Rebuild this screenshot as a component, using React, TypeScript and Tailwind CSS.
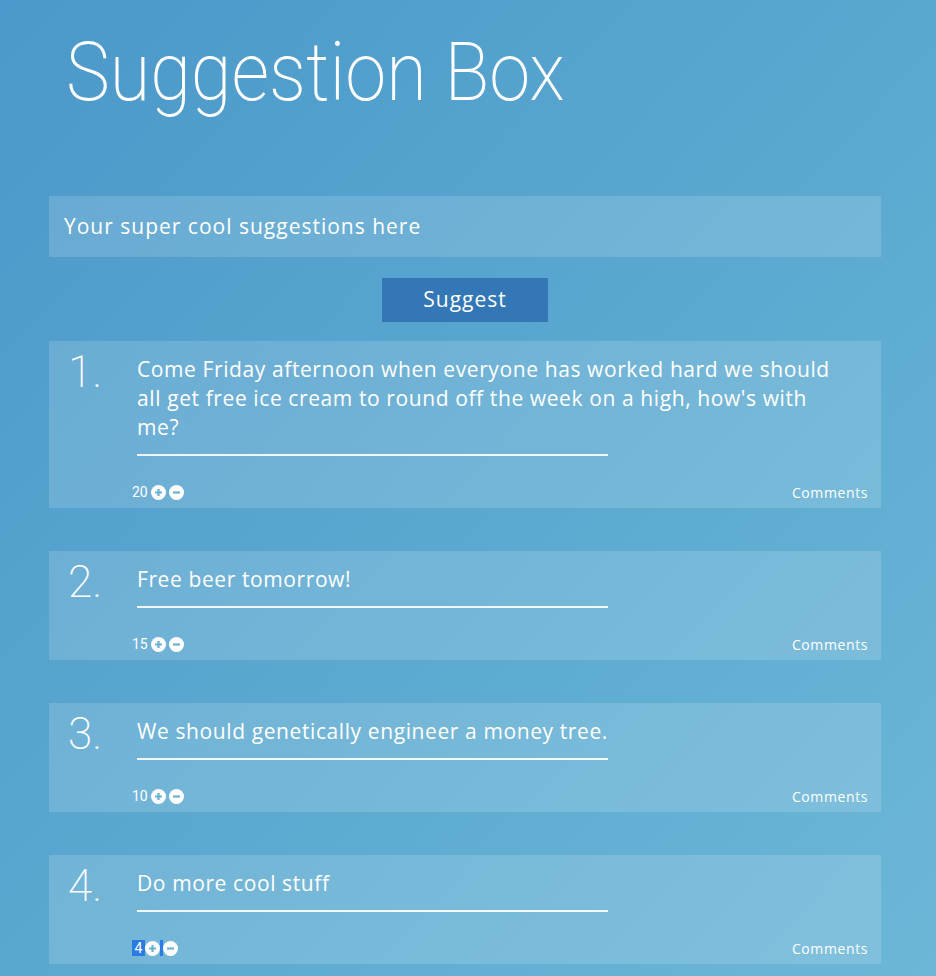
import React from "react";

const items = [
  { n: 1, text: "Come Friday afternoon when everyone has worked hard we should all get free ice cream to round off the week on a high, how's with me?", votes: 20 },
  { n: 2, text: "Free beer tomorrow!", votes: 15 },
  { n: 3, text: "We should genetically engineer a money tree.", votes: 10 },
  { n: 4, text: "Do more cool stuff", votes: 4, selected: true },
];

function Plus() {
  return (
    <svg width="15" height="15" viewBox="0 0 15 15">
      <circle cx="7.5" cy="7.5" r="7.5" fill="#fff" />
      <path d="M7.5 4v7M4 7.5h7" stroke="#6eb0d5" strokeWidth="2.2" />
    </svg>
  );
}
function Minus() {
  return (
    <svg width="15" height="15" viewBox="0 0 15 15">
      <circle cx="7.5" cy="7.5" r="7.5" fill="#fff" />
      <path d="M4 7.5h7" stroke="#6eb0d5" strokeWidth="2.2" />
    </svg>
  );
}

export default function App() {
  return (
    <div
      className="min-h-screen w-full bg-linear-to-br from-[#4b98ca] via-[#5aa8d0] to-[#6cb7d8] text-white"
      style={{ fontFamily: '"Open Sans", "Noto Sans", sans-serif' }}
    >
      <div className="mx-[49px] w-[832px] pb-3">
        <h1
          className="ml-[17px] pt-[31px] text-[82px] leading-none font-extralight scale-x-[0.9] origin-left whitespace-nowrap"
          style={{ fontFamily: 'Roboto, "Open Sans", sans-serif' }}
        >
          Suggestion Box
        </h1>
        <div className="mt-[83px] h-[61px] bg-white/15 flex items-center pl-[15px]">
          <input
            className="w-full bg-transparent outline-none text-[21px] tracking-[1px] text-white placeholder:text-white"
            placeholder="Your super cool suggestions here"
          />
        </div>
        <div className="mt-[21px] flex justify-center">
          <button className="w-[166px] h-[44px] bg-[#3377b6] text-white text-[21px] tracking-[1px]">Suggest</button>
        </div>
        <div className="mt-[19px] flex flex-col gap-[43px]">
          {items.map((it) => (
            <div key={it.n} className="bg-white/15 flex pl-[19px] pr-[13px] pt-[14px] pb-[8px]">
              <div
                className="w-[69px] shrink-0 text-[44px] leading-none font-extralight mt-[-5px]"
                style={{ fontFamily: 'Roboto, "Open Sans", sans-serif' }}
              >
                {it.n}.
              </div>
              <div className="flex-1">
                <p className="max-w-[712px] text-[21px] leading-[29px] tracking-[0.6px]">{it.text}</p>
                <div className="mt-[12px] h-[2px] w-[471px] bg-white/90" />
                <div className="mt-[28px] h-[16px] flex items-center justify-between">
                  <div className="flex items-center ml-[-5px] text-[14px]" style={{ fontFamily: 'Roboto, sans-serif' }}>
                    <span className={it.selected ? "bg-[#2a7be4] w-[13px] h-[16px] text-center leading-[16px]" : "mr-[3px]"}>{it.votes}</span>
                    <Plus />
                    <span className={it.selected ? "w-[3px] h-[16px] bg-[#2a7be4]" : "w-[3px]"} />
                    <Minus />
                  </div>
                  <span className="text-[14px] tracking-[0.6px]">Comments</span>
                </div>
              </div>
            </div>
          ))}
        </div>
      </div>
    </div>
  );
}
